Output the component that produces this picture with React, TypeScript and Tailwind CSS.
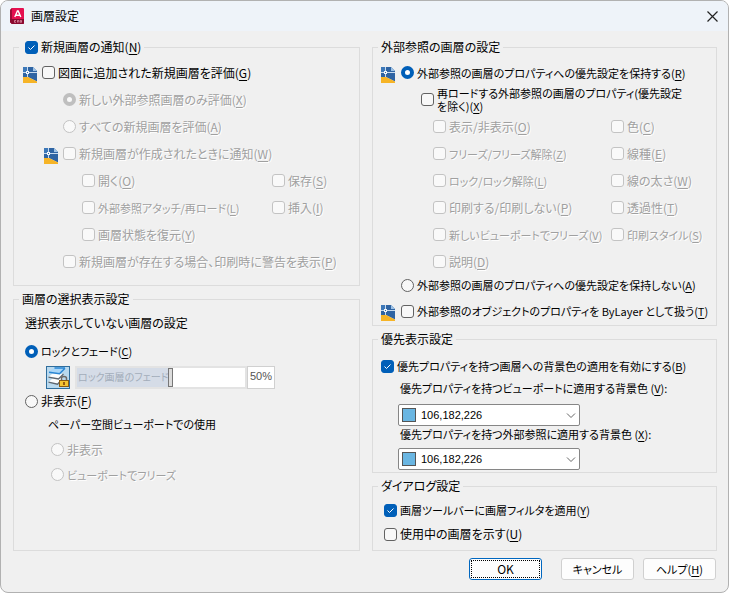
import { useState } from 'react'
import type { ReactNode } from 'react'
import clsx from 'clsx'

const notifyOptions = [
  { label: '開く', accessKey: 'O' },
  { label: '保存', accessKey: 'S' },
  { label: '外部参照アタッチ/再ロード', accessKey: 'L', dense: true },
  { label: '挿入', accessKey: 'I' },
  { label: '画層状態を復元', accessKey: 'Y' }
]

const xrefOptions = [
  { label: '表示/非表示', accessKey: 'O' },
  { label: '色', accessKey: 'C' },
  { label: 'フリーズ/フリーズ解除', accessKey: 'Z', dense: true },
  { label: '線種', accessKey: 'E' },
  { label: 'ロック/ロック解除', accessKey: 'L', dense: true },
  { label: '線の太さ', accessKey: 'W' },
  { label: '印刷する/印刷しない', accessKey: 'P' },
  { label: '透過性', accessKey: 'T' },
  { label: '新しいビューポートでフリーズ', accessKey: 'V', dense: true },
  { label: '印刷スタイル', accessKey: 'S', dense: true },
  { label: '説明', accessKey: 'D' }
]

const MAX_FADE = 90

function AppIcon() {
  return (
    <svg width="15" height="17" viewBox="0 0 15 17" aria-hidden="true">
      <path d="M1 2 L3 0 H14 Q15 0 15 1 V15 Q15 16 14 16 H3 L1 14 Z" fill="#e51050" />
      <path d="M1 2 L3 0 V16 L1 14 Z" fill="#9c0c36" />
      <path d="M1 11 H15 V15 Q15 16 14 16 H3 L1 14 Z" fill="#8a0a30" />
      <path d="M5.8 9 L8.4 3 H9.2 L11.8 9 M7 7.2 H10.6" fill="none" stroke="#fff" strokeWidth="1.4" />
      <path d="M5.5 12.5 H7 M5.5 14.3 H7 M5.5 12.5 V14.3 M8.5 14.5 V12.5 H9.8 V14.5 M11.3 12.5 H12.5 V14.3 H11.3 Z" fill="none" stroke="#e9a6ba" strokeWidth="0.7" />
    </svg>
  )
}

function DwgIcon() {
  return (
    <svg width="14" height="16" viewBox="0 0 14 16" className="mt-1 shrink-0" aria-hidden="true">
      <path d="M0 0 H10 L14 4 V14.5 L5 10 H0 Z" fill="#2f64a3" />
      <path d="M0 0 H4 V5 H0 Z" fill="#3d78b8" />
      <path d="M10 0 L14 4 H10 Z" fill="#9fc3e6" />
      <path d="M0 10 H5 L14 14.5 V16 H0 Z" fill="#f6b426" />
      <path d="M4.5 0 V4 M4.5 7 V10 M0 5.5 H3 M6 5.5 H14" stroke="#c9dbee" />
      <rect x="3.5" y="4.5" width="2" height="2" fill="#2f64a3" stroke="#f2f7fc" />
    </svg>
  )
}

function LayersLockIcon() {
  return (
    <svg width="24" height="23" viewBox="0 0 24 23" className="shrink-0" aria-hidden="true">
      <rect x="0.5" y="0.5" width="23" height="22" fill="#b9d9ee" stroke="#2f6d9c" />
      <path d="M2.5 16 L6.5 12.5 L17 12 L12 18 Z" fill="#fbfcfd" />
      <path d="M2.5 16.2 L11.5 18.2 L15 14.5" fill="none" stroke="#5f666e" strokeWidth="1.3" />
      <path d="M2.5 11 L6.5 7.5 L18 8 L13 12.5 Z" fill="#fbfcfd" />
      <path d="M2.5 11.2 L12.5 13 L17.5 8" fill="none" stroke="#5f666e" strokeWidth="1.3" />
      <path d="M3 6 L8.5 1.8 H19 L13.5 7.5 Z" fill="#a9d6f8" />
      <path d="M8.5 1.9 H19 M3 6.2 L13.5 7.7 L19 2.2" fill="none" stroke="#2a86d4" strokeWidth="1.5" />
      <path d="M15.5 15 V12.5 Q15.5 10.5 18 10.5 Q20.5 10.5 20.5 12.5 V15" fill="none" stroke="#6f6a66" strokeWidth="1.5" />
      <rect x="13.5" y="14.5" width="9" height="6" fill="#f5c431" stroke="#8a5a12" />
      <path d="M18 16 V19" stroke="#7a3a08" strokeWidth="1.5" />
    </svg>
  )
}

function Caption({ text, accessKey, tail }: { text: string; accessKey?: string; tail?: string }) {
  return (
    <span>
      {text}
      {accessKey && (
        <>
          (<span className="underline underline-offset-2">{accessKey}</span>)
        </>
      )}
      {tail}
    </span>
  )
}

type OptionProps = {
  type?: 'checkbox' | 'radio'
  name?: string
  label: string
  accessKey?: string
  checked?: boolean
  disabled?: boolean
  dense?: boolean
  className?: string
}

function Option({ type = 'checkbox', name, label, accessKey, checked, disabled, dense, className }: OptionProps) {
  const radio = type === 'radio'
  return (
    <label
      className={clsx(
        'flex items-center gap-[3px]',
        dense && 'text-[11px]',
        disabled && 'text-[#a0a0a0] [text-shadow:1px_1px_0_#fff]',
        className
      )}
    >
      <span className="relative flex shrink-0">
        <input
          type={type}
          name={name}
          defaultChecked={checked}
          disabled={disabled}
          className={clsx(
            'peer size-[13px] appearance-none border border-[#626262] bg-[#f8f8f8] disabled:border-[#c3c3c3] disabled:bg-[#f9f9f9]',
            radio
              ? 'rounded-full checked:border-4 checked:border-[#005fb8] checked:bg-white disabled:checked:border-[#bfbfbf]'
              : 'rounded-[3px] checked:border-[#005fb8] checked:bg-[#005fb8]'
          )}
        />
        {!radio && (
          <svg
            width="13"
            height="13"
            viewBox="0 0 13 13"
            className="pointer-events-none absolute inset-0 hidden peer-checked:block"
            aria-hidden="true"
          >
            <path d="M3.5 6.5 L5.5 8.5 L9.5 4.5" fill="none" stroke="#fff" />
          </svg>
        )}
      </span>
      <Caption text={label} accessKey={accessKey} />
    </label>
  )
}

function Group({ title, className, children }: { title: ReactNode; className?: string; children: ReactNode }) {
  return (
    <fieldset className={clsx('min-w-0 border border-[#dcdcdc]', className)}>
      <legend className="ml-[5px] h-4 px-[3px]">{title}</legend>
      {children}
    </fieldset>
  )
}

function ColorSelect({ id }: { id: string }) {
  return (
    <div className="relative ml-[25px] w-[182px]">
      <select
        id={id}
        className="block h-[22px] w-full appearance-none rounded-[2px] border border-[#868686] bg-white pl-[22px] font-['Liberation_Sans',sans-serif] text-[11px]"
      >
        <option>106,182,226</option>
      </select>
      <span className="pointer-events-none absolute top-1 left-1 size-[14px] border border-[#555] bg-[#6ab6e2]" />
      <svg width="10" height="6" viewBox="0 0 10 6" className="pointer-events-none absolute top-[9px] right-1" aria-hidden="true">
        <path d="M1 0.5 L5 4.5 L9 0.5" fill="none" stroke="#666" />
      </svg>
    </div>
  )
}

function FadeSlider() {
  const [fade, setFade] = useState(50)
  return (
    <div className="ml-8 flex h-[23px] items-stretch">
      <LayersLockIcon />
      <div className="relative ml-[5px] w-[172px] border-2 border-[#e3e3e3] bg-white">
        <div className="absolute inset-y-0 left-0 bg-[#d5dce7]" style={{ width: `${(fade / MAX_FADE) * 100}%` }} />
        <label htmlFor="fade" className="pointer-events-none absolute top-0 left-px text-[10px] leading-[18px] text-[#a3adba]">
          ロック画層のフェード
        </label>
        <input
          id="fade"
          type="range"
          min={0}
          max={MAX_FADE}
          value={fade}
          onChange={(e) => setFade(Number(e.target.value))}
          className="relative block h-[19px] w-full appearance-none bg-transparent [&::-webkit-slider-thumb]:h-[19px] [&::-webkit-slider-thumb]:w-[5px] [&::-webkit-slider-thumb]:appearance-none [&::-webkit-slider-thumb]:border [&::-webkit-slider-thumb]:border-[#777] [&::-webkit-slider-thumb]:bg-[#dcdcdc]"
        />
      </div>
      <output
        htmlFor="fade"
        className="w-7 border border-[#d0d0d0] bg-white text-center font-['Liberation_Sans',sans-serif] text-[11px] leading-[19px] text-[#555]"
      >
        {fade}%
      </output>
    </div>
  )
}

function NewLayerGroup() {
  return (
    <Group className="pb-[10px]" title={<Option label="新規画層の通知" accessKey="N" checked className="ml-[3px]" />}>
      <div className="mt-1 flex h-[27px] items-center gap-[5px] pl-[9px]">
        <DwgIcon />
        <Option label="図面に追加された新規画層を評価" accessKey="G" />
      </div>
      <Option type="radio" name="evaluate" label="新しい外部参照画層のみ評価" accessKey="X" checked disabled className="ml-[49px] h-[27px]" />
      <Option type="radio" name="evaluate" label="すべての新規画層を評価" accessKey="A" disabled className="ml-[49px] h-[27px]" />
      <div className="flex h-[27px] items-center gap-[5px] pl-[30px]">
        <DwgIcon />
        <Option label="新規画層が作成されたときに通知" accessKey="W" disabled />
      </div>
      <div className="ml-[68px] grid grid-cols-[190px_1fr]">
        {notifyOptions.map((option) => (
          <Option key={option.label} {...option} disabled className="h-[27px]" />
        ))}
      </div>
      <Option label="新規画層が存在する場合、印刷時に警告を表示" accessKey="P" disabled className="ml-[49px] h-[27px]" />
    </Group>
  )
}

function IsolateGroup() {
  return (
    <Group className="flex-1" title="画層の選択表示設定">
      <p className="mt-2 ml-[11px]">選択表示していない画層の設定</p>
      <Option type="radio" name="isolate" label="ロックとフェード" accessKey="C" checked dense className="mt-3 mb-[7px] ml-[11px]" />
      <FadeSlider />
      <Option type="radio" name="isolate" label="非表示" accessKey="F" className="mt-1 ml-[11px]" />
      <p className="mt-[7px] ml-[34px] text-[11px]">ペーパー空間ビューポートでの使用</p>
      <Option type="radio" name="paper" label="非表示" disabled className="mt-[5px] ml-[37px] h-[25px]" />
      <Option type="radio" name="paper" label="ビューポートでフリーズ" disabled dense className="ml-[37px] h-[25px]" />
    </Group>
  )
}

function XrefGroup() {
  return (
    <Group className="pb-[2px]" title="外部参照の画層の設定">
      <div className="mt-1 flex h-[27px] items-center gap-[6px] pl-2">
        <DwgIcon />
        <Option type="radio" name="retain" label="外部参照の画層のプロパティへの優先設定を保持する" accessKey="R" checked dense />
      </div>
      <Option
        label="再ロードする外部参照の画層のプロパティ(優先設定を除く)"
        accessKey="X"
        dense
        className="ml-12 h-[27px] pr-8 leading-[13px]"
      />
      <div className="ml-[60px] grid grid-cols-[178px_1fr]">
        {xrefOptions.map((option) => (
          <Option key={option.label} {...option} disabled className="h-[27px]" />
        ))}
      </div>
      <Option
        type="radio"
        name="retain"
        label="外部参照の画層のプロパティへの優先設定を保持しない"
        accessKey="A"
        dense
        className="ml-7 h-5"
      />
      <div className="mt-1 flex h-6 items-center gap-[6px] pl-2">
        <DwgIcon />
        <Option label="外部参照のオブジェクトのプロパティを ByLayer として扱う" accessKey="T" dense />
      </div>
    </Group>
  )
}

function OverrideGroup() {
  return (
    <Group className="pb-[2px]" title="優先表示設定">
      <Option label="優先プロパティを持つ画層への背景色の適用を有効にする" accessKey="B" checked dense className="mt-[11px] ml-2" />
      <label htmlFor="viewport-color" className="mt-[6px] ml-[27px] block text-[11px]">
        <Caption text="優先プロパティを持つビューポートに適用する背景色 " accessKey="V" tail=":" />
      </label>
      <div className="mt-2">
        <ColorSelect id="viewport-color" />
      </div>
      <label htmlFor="xref-color" className="mb-[6px] ml-[27px] block text-[11px]">
        <Caption text="優先プロパティを持つ外部参照に適用する背景色 " accessKey="X" tail=":" />
      </label>
      <ColorSelect id="xref-color" />
    </Group>
  )
}

export default function App() {
  return (
    <div className="flex min-h-screen flex-col overflow-hidden rounded-lg border border-[#b1b1b1] bg-[#f0f0f0] font-['Noto_Sans_CJK_JP',sans-serif] text-[12px] leading-4 text-black [font-feature-settings:'palt']">
      <header className="flex h-[30px] items-center bg-[#eef3f9] pr-[10px] pl-2">
        <AppIcon />
        <h1 className="ml-[7px]">画層設定</h1>
        <button type="button" aria-label="閉じる" className="ml-auto">
          <svg width="11" height="11" viewBox="0 0 11 11" aria-hidden="true">
            <path d="M0.5 0.5 L10.5 10.5 M10.5 0.5 L0.5 10.5" stroke="#222" strokeWidth="1.2" />
          </svg>
        </button>
      </header>

      <main className="grid flex-1 grid-cols-[347fr_345fr] gap-3 pt-2 pr-[11px] pl-3">
        <div className="flex flex-col gap-[5px]">
          <NewLayerGroup />
          <IsolateGroup />
        </div>
        <div className="flex flex-col gap-[5px]">
          <XrefGroup />
          <OverrideGroup />
          <Group className="flex-1" title="ダイアログ設定">
            <Option label="画層ツールバーに画層フィルタを適用" accessKey="Y" checked dense className="mt-1 ml-[11px] h-6" />
            <Option label="使用中の画層を示す" accessKey="U" className="ml-[11px] h-6" />
          </Group>
        </div>
      </main>

      <footer className="flex justify-end gap-[9px] px-3 pt-[7px] pb-3">
        <button type="submit" className="mr-[10px] h-[22px] w-[73px] rounded-[3px] border border-[#0067c0] bg-[#fdfdfd] p-px">
          <span className="flex h-full items-center justify-center border border-dotted border-black">OK</span>
        </button>
        <button type="button" className="h-[22px] w-[73px] rounded-[3px] border border-[#d0d0d0] bg-[#fdfdfd] text-[11px]">
          キャンセル
        </button>
        <button type="button" className="h-[22px] w-[73px] rounded-[3px] border border-[#d0d0d0] bg-[#fdfdfd] text-[11px]">
          <Caption text="ヘルプ" accessKey="H" />
        </button>
      </footer>
    </div>
  )
}
